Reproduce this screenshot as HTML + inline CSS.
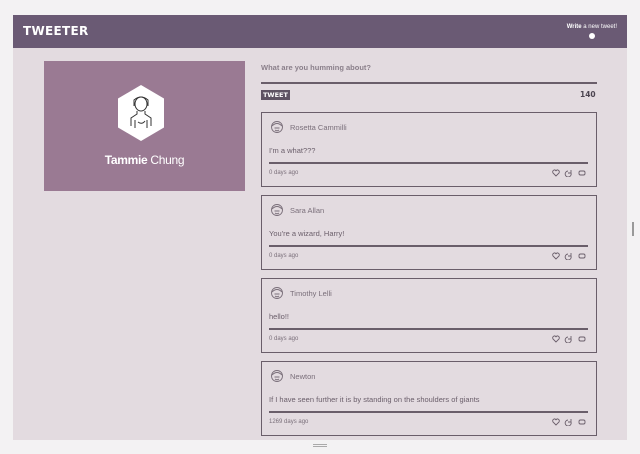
<!DOCTYPE html>
<html><head><style>
*{margin:0;padding:0;box-sizing:border-box}
body{width:640px;height:454px;background:#f3f2f3;font-family:"Liberation Sans",sans-serif;position:relative;overflow:hidden;color:#6a5e6a}
#app{position:absolute;left:13px;top:15px;width:614px;height:425px;background:#e3dbe0}
#hdr{height:33px;background:#6a5a74;position:relative}
#logo{position:absolute;left:10px;top:9px;color:#fff;font-weight:900;font-size:12px;letter-spacing:0.3px;font-family:"DejaVu Sans",sans-serif}
#write{position:absolute;right:10px;top:9px;color:#fff;font-size:6px}
#dot{position:absolute;right:32px;top:18px;width:6px;height:6px;border-radius:50%;background:#fff}
#card{position:absolute;left:31px;top:46px;width:201px;height:130px;background:#9a7a93}
#name{position:absolute;left:0;right:0;top:92px;text-align:center;color:#fff;font-size:12px;letter-spacing:-0.3px}
.q{position:absolute;left:248px;top:48px;font-size:7.5px;color:#8a7f8a;font-weight:bold}
.line{position:absolute;left:248px;width:336px;height:2px;background:#6a5e6a}
#tb{position:absolute;left:248px;top:75px;background:#5e5363;color:#fff;font-size:6.5px;font-weight:900;padding:1px 2px;font-family:"DejaVu Sans",sans-serif}
#cnt{position:absolute;left:567px;top:75px;font-size:7.5px;font-weight:900;color:#4c4450;font-family:"DejaVu Sans",sans-serif}
.tw{position:absolute;left:248px;width:336px;height:75px;border:1.5px solid #6a5e6a}
.av{position:absolute;left:8px;top:7px}
.un{position:absolute;left:28px;top:10px;font-size:7.5px;color:#7a6f7a}
.tx{position:absolute;left:7px;top:33px;font-size:7.5px;color:#6a5e6a}
.hr{position:absolute;left:7px;right:8px;top:49px;height:1.5px;background:#6a5e6a}
.tm{position:absolute;left:7px;top:57px;font-size:6px;color:#7a6f7a}
.ic{position:absolute;right:8px;top:56px}
#sb{position:absolute;left:632px;top:222px;width:2px;height:14px;border-left:1px solid #999;border-right:1px solid #999}
#hb{position:absolute;left:313px;top:444px;width:14px;height:3px;border-top:1px solid #aaa;border-bottom:1px solid #aaa}
</style></head><body>
<svg width="0" height="0" style="position:absolute"><defs>
<g id="face" fill="none" stroke="#7a6f7a" stroke-width="0.9"><circle cx="7" cy="7" r="5.5"/><path d="M2 6q5-5 10 0M4.5 8h5M5 10q2 1.5 4 0"/></g>
<g id="icons" fill="none" stroke="#6a5e6a" stroke-width="0.9"><path d="M4 7L1 4q-1-2 1-3 1-.5 2 .8 1-1.3 2-.8 2 1 1 3z"/><path d="M16 2a3 3 0 1 0 3 2M19 1v3h-3"/><rect x="27" y="2" width="6" height="4" rx="1.5"/></g>
</defs></svg>
<div id="app">
<div id="hdr"><div id="logo">TWEETER</div><div id="write"><b>Write</b> a new tweet!</div><div id="dot"></div></div>
<div id="card">
<svg style="position:absolute;left:73px;top:23px" width="48" height="58" viewBox="0 0 48 58"><polygon points="24,1 47,14.5 47,43.5 24,57 1,43.5 1,14.5" fill="#fff"/>
<g fill="none" stroke="#333" stroke-width="1"><ellipse cx="24" cy="20" rx="6" ry="7"/><path d="M17 22v-6q7-6 14 0v6M20 27v3l-6 4v8M28 27v3l6 4v8M18 36v8M30 36v8M21 38q4 3 7-1"/></g></svg>
<div id="name"><b>Tammie</b> Chung</div></div>
<div class="q">What are you humming about?</div>
<div class="line" style="top:67px"></div>
<div id="tb">TWEET</div><div id="cnt">140</div>
<div class="tw" style="top:97px"><svg class="av" width="14" height="14"><use href="#face"/></svg><div class="un">Rosetta Cammilli</div><div class="tx">I'm a what???</div><div class="hr"></div><div class="tm">0 days ago</div><svg class="ic" width="36" height="8"><use href="#icons"/></svg></div>
<div class="tw" style="top:180px"><svg class="av" width="14" height="14"><use href="#face"/></svg><div class="un">Sara Allan</div><div class="tx">You're a wizard, Harry!</div><div class="hr"></div><div class="tm">0 days ago</div><svg class="ic" width="36" height="8"><use href="#icons"/></svg></div>
<div class="tw" style="top:263px"><svg class="av" width="14" height="14"><use href="#face"/></svg><div class="un">Timothy Lelli</div><div class="tx">hello!!</div><div class="hr"></div><div class="tm">0 days ago</div><svg class="ic" width="36" height="8"><use href="#icons"/></svg></div>
<div class="tw" style="top:346px"><svg class="av" width="14" height="14"><use href="#face"/></svg><div class="un">Newton</div><div class="tx">If I have seen further it is by standing on the shoulders of giants</div><div class="hr"></div><div class="tm">1269 days ago</div><svg class="ic" width="36" height="8"><use href="#icons"/></svg></div>
</div>
<div id="sb"></div><div id="hb"></div>
</body></html>
